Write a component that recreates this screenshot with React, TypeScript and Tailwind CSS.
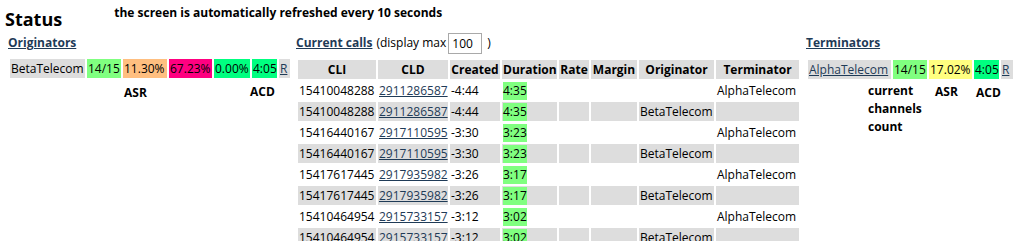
import React from "react";

const W = ["w-[78px]", "w-[70px]", "w-[50px]", "w-[55px]", "w-[30px]", "w-[46px]", "w-[75px]", "w-[83px]"];
const HEAD = ["CLI", "CLD", "Created", "Duration", "Rate", "Margin", "Originator", "Terminator"];

const pairs = [
  ["15410048288", "2911286587", "-4:44", "4:35"],
  ["15416440167", "2917110595", "-3:30", "3:23"],
  ["15417617445", "2917935982", "-3:26", "3:17"],
  ["15410464954", "2915733157", "-3:12", "3:02"],
];

const link = "text-[#1f3b57] underline";

function CallRow({ d, gray }: { d: string[]; gray: boolean }) {
  const bg = gray ? "bg-[#dddddd]" : "";
  const cell = `h-[19px] shrink-0 px-[1px] pt-[1px] leading-[18px] whitespace-nowrap overflow-hidden ${bg}`;
  return (
    <div className="flex gap-[2px]">
      <div className={`${cell} ${W[0]}`}>{d[0]}</div>
      <div className={`${cell} ${W[1]}`}>
        <span className={link}>{d[1]}</span>
      </div>
      <div className={`${cell} ${W[2]}`}>{d[2]}</div>
      <div className={`${cell} ${W[3]}`}>
        <span className="inline-block bg-[#80ff80] leading-[18px]">{d[3]}</span>
      </div>
      <div className={`${cell} ${W[4]}`}></div>
      <div className={`${cell} ${W[5]}`}></div>
      <div className={`${cell} ${W[6]}`}>{gray ? "BetaTelecom" : ""}</div>
      <div className={`${cell} ${W[7]}`}>{gray ? "" : "AlphaTelecom"}</div>
    </div>
  );
}

export default function App() {
  const sc = "h-[19px] shrink-0 px-[1px] pt-[1px] leading-[18px] whitespace-nowrap overflow-hidden";
  return (
    <div className="w-[1018px] h-[241px] overflow-hidden bg-white text-black text-[12px] font-['Open_Sans',sans-serif]">
      <div className="flex items-start h-[32px]">
        <div className="ml-[5px] mt-[7px] text-[18px] font-bold leading-[24px]">Status</div>
        <div className="ml-[52px] mt-[5px] font-bold leading-[16px]">
          the screen is automatically refreshed every 10 seconds
        </div>
      </div>
      <div className="flex items-start">
        {/* Originators */}
        <div className="w-[296px] shrink-0 pl-[8px]">
          <div className="h-[22px] leading-[22px] font-bold">
            <span className={link}>Originators</span>
          </div>
          <div className="mt-[5px] ml-[2px] flex gap-[2px]">
            <div className={`${sc} w-[75px] bg-[#dddddd]`}>BetaTelecom</div>
            <div className={`${sc} w-[34px] bg-[#80ff80]`}>14/15</div>
            <div className={`${sc} w-[44px] bg-[#ffbf80]`}>11.30%</div>
            <div className={`${sc} w-[43px] bg-[#ff0080]`}>67.23%</div>
            <div className={`${sc} w-[36px] bg-[#00ff80]`}>0.00%</div>
            <div className={`${sc} w-[25px] bg-[#00ff80]`}>4:05</div>
            <div className={`${sc} w-[11px] bg-[#dddddd]`}>
              <span className={link}>R</span>
            </div>
          </div>
          <div className="mt-[6px] flex font-bold leading-[18px]">
            <div className="w-[116px] shrink-0"></div>
            <div className="w-[126px] shrink-0">ASR</div>
            <div className="-mt-[1px]">ACD</div>
          </div>
        </div>

        {/* Current calls */}
        <div className="w-[510px] shrink-0">
          <div className="h-[22px] flex items-center whitespace-nowrap">
            <span className={`font-bold ${link}`}>Current calls</span>
            <span className="ml-[4px]">(display max</span>
            <input
              readOnly
              defaultValue="100"
              className="ml-[2px] w-[34px] h-[21px] border border-[#a9a9a9] bg-white px-[3px] text-[12px] text-black outline-none font-['Open_Sans',sans-serif]"
            />
            <span className="ml-[5px]">)</span>
          </div>
          <div className="mt-[6px] ml-[2px] flex flex-col gap-[2px]">
            <div className="flex gap-[2px]">
              {HEAD.map((h, i) => (
                <div key={h} className={`${sc} ${W[i]} bg-[#dddddd] font-bold text-center`}>
                  {h}
                </div>
              ))}
            </div>
            {pairs.map((d, i) => (
              <React.Fragment key={i}>
                <CallRow d={d} gray={false} />
                <CallRow d={d} gray={true} />
              </React.Fragment>
            ))}
          </div>
        </div>

        {/* Terminators */}
        <div className="flex-1">
          <div className="h-[22px] leading-[22px] font-bold">
            <span className={link}>Terminators</span>
          </div>
          <div className="mt-[6px] ml-[2px] flex gap-[2px]">
            <div className={`${sc} w-[83px] bg-[#dddddd]`}>
              <span className={link}>AlphaTelecom</span>
            </div>
            <div className={`${sc} w-[34px] bg-[#80ff80]`}>14/15</div>
            <div className={`${sc} w-[43px] bg-[#ffff80]`}>17.02%</div>
            <div className={`${sc} w-[25px] bg-[#00ff80]`}>4:05</div>
            <div className={`${sc} w-[12px] bg-[#dddddd]`}>
              <span className={link}>R</span>
            </div>
          </div>
          <div className="mt-[3px] flex font-bold leading-[18px]">
            <div className="w-[62px] shrink-0"></div>
            <div className="w-[67px] shrink-0">current channels count</div>
            <div className="w-[41px] shrink-0 mt-[1px]">ASR</div>
            <div className="mt-[2px]">ACD</div>
          </div>
        </div>
      </div>
    </div>
  );
}
